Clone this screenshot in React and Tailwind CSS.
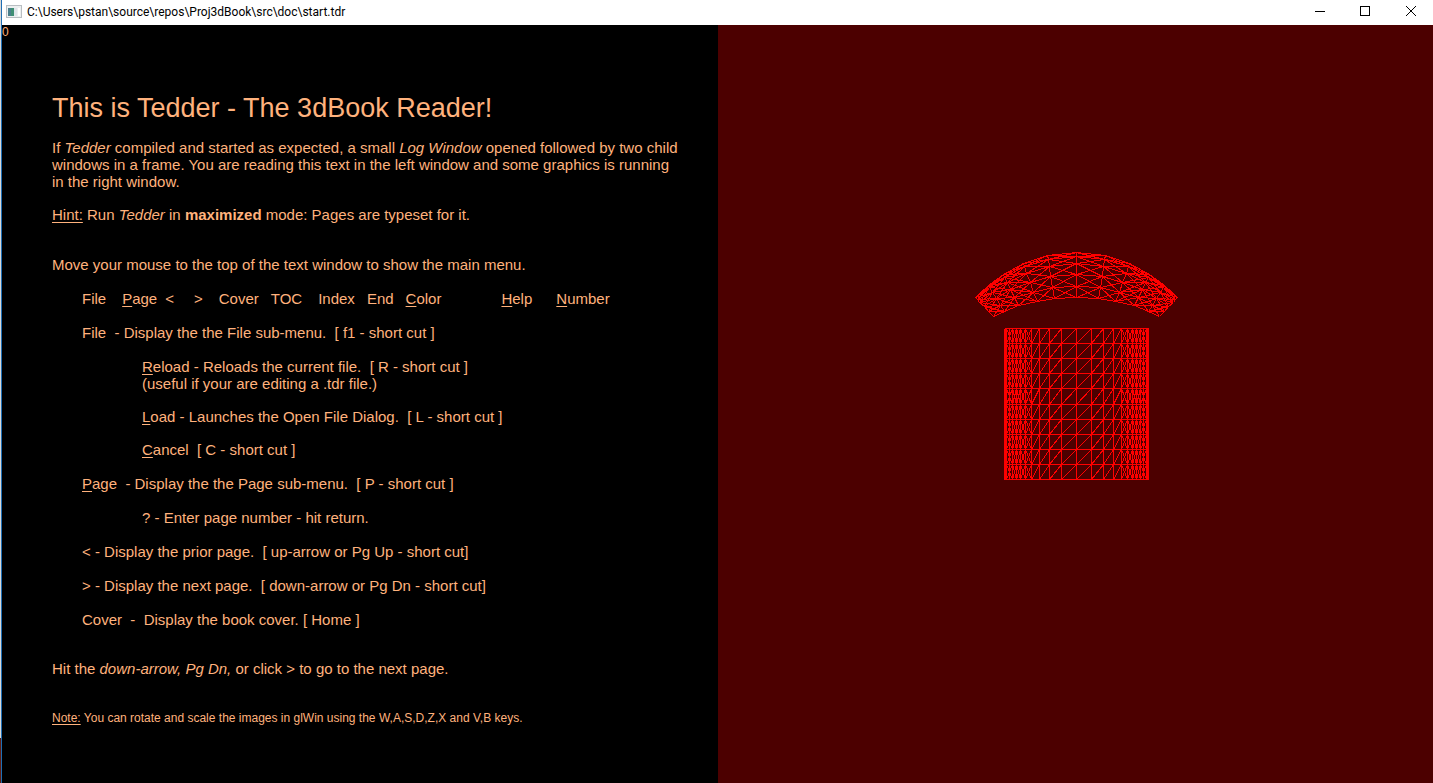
import React from "react";

const offsets = [0, 15, 27, 37, 45, 51, 56, 60, 64, 67, 70, 71, 72];
const columnXs = [...offsets.slice(1).reverse().map((o) => 72 - o), ...offsets.map((o) => 72 + o)];
const rowYs = [0, 15, 30, 45, 60, 76, 91, 106, 121, 136, 151];
const crossed = [[2, 8], [8, 12], [12, 16], [16, 21], [21, 27]];

function columnPath() {
  let d = "";
  columnXs.forEach((x) => {
    d += `M${x} 0V151`;
  });
  rowYs.forEach((y) => {
    d += `M0 ${y}H144`;
  });
  for (let r = 0; r < rowYs.length - 1; r++) {
    const top = rowYs[r];
    const bottom = rowYs[r + 1];
    for (let c = 0; c < columnXs.length - 1; c++) {
      const a = columnXs[c];
      const b = columnXs[c + 1];
      if (a >= 21 && b <= 123) d += `M${a} ${bottom}L${b} ${top}`;
    }
    crossed.forEach(([a, b]) => {
      d += `M${a} ${bottom}L${b} ${top}M${a} ${top}L${b} ${bottom}`;
      d += `M${144 - a} ${bottom}L${144 - b} ${top}M${144 - a} ${top}L${144 - b} ${bottom}`;
    });
  }
  return d;
}

const topArc = [[0, 0], [29, 3], [53, 11], [73, 22], [88, 33], [101, 45]];
const bottomArc = [[0, 45], [22, 46], [39, 49], [58, 53], [72, 59], [83, 64]];
const bands = [0, 0.09, 0.25, 0.49, 0.75, 1];

function archPath() {
  let d = "";
  [-1, 1].forEach((side) => {
    const node = (c, r) => {
      const t = bands[r];
      const x = topArc[c][0] + (bottomArc[c][0] - topArc[c][0]) * t;
      const y = topArc[c][1] + (bottomArc[c][1] - topArc[c][1]) * t;
      return `${101 + side * Math.round(x)} ${Math.round(y)}`;
    };
    for (let c = 0; c <= 5; c++) {
      for (let r = 0; r <= 5; r++) {
        if (r < 5) d += `M${node(c, r)}L${node(c, r + 1)}`;
        if (c < 5) d += `M${node(c, r)}L${node(c + 1, r)}`;
        if (c < 5 && r < 5) {
          d += `M${node(c, r)}L${node(c + 1, r + 1)}`;
          d += `M${node(c, r + 1)}L${node(c + 1, r)}`;
        }
        if (c >= 2 && c < 5 && r >= 2) d += `M${node(c, r)}L${node(c + 1, r - 2)}`;
      }
    }
  });
  return d;
}

function TitleBar() {
  const button = "flex h-full w-[46px] justify-center pt-1.5";
  return (
    <header className="flex h-[25px] shrink-0 items-center bg-white text-black">
      <svg className="mb-0.5 ml-1 h-4 w-4 shrink-0" viewBox="0 0 16 16" shapeRendering="crispEdges" aria-hidden="true">
        <rect x="0" y="1" width="16" height="13" fill="#b9bec2" />
        <rect x="1" y="2" width="14" height="11" fill="#eceff0" />
        <rect x="2" y="4" width="6" height="8" fill="#3f8f74" />
        <rect x="2" y="4" width="3" height="8" fill="#4a7f8c" />
        <rect x="8" y="4" width="3" height="8" fill="#dfe5ea" />
        <rect x="12" y="4" width="2" height="8" fill="#ffffff" />
      </svg>
      <h1 className="mb-0.5 ml-[5px] flex-1 truncate font-[Roboto,sans-serif] text-xs">
        C:\Users\pstan\source\repos\Proj3dBook\src\doc\start.tdr
      </h1>
      <button aria-label="Minimize" className={button}>
        <svg className="h-3.5 w-3.5" viewBox="0 0 14 14" shapeRendering="crispEdges"><path d="M4 5.5H14" stroke="#000" /></svg>
      </button>
      <button aria-label="Maximize" className={button}>
        <svg className="h-3.5 w-3.5" viewBox="0 0 14 14" shapeRendering="crispEdges"><rect x="3.5" y="0.5" width="9" height="9" fill="none" stroke="#000" /></svg>
      </button>
      <button aria-label="Close" className={button}>
        <svg className="h-3.5 w-3.5" viewBox="0 0 14 14"><path d="M3 0L13 10M13 0L3 10" stroke="#000" /></svg>
      </button>
    </header>
  );
}

function U({ children }) {
  return <span className="underline underline-offset-2">{children}</span>;
}

function MenuWords() {
  return (
    <ul className="flex">
      <li>File</li>
      <li className="ml-4"><U>P</U>age</li>
      <li className="ml-2">&lt;</li>
      <li className="ml-5">&gt;</li>
      <li className="ml-4">Cover</li>
      <li className="ml-3">TOC</li>
      <li className="ml-4">Index</li>
      <li className="ml-3">End</li>
      <li className="ml-3"><U>C</U>olor</li>
      <li className="ml-15"><U>H</U>elp</li>
      <li className="ml-6"><U>N</U>umber</li>
    </ul>
  );
}

function TextPage() {
  return (
    <main className="min-w-0 bg-black font-['Liberation_Sans',Arial,sans-serif] text-[#ffb27d]">
      <div className="h-[68px] text-xs leading-[15px]">0</div>
      <article className="flex flex-col gap-4 px-[50px] text-[15px] leading-[17px]">
        <h2 className="text-[27px] leading-[30px]">This is Tedder - The 3dBook Reader!</h2>
        <p>
          <span className="block whitespace-nowrap text-justify [text-align-last:justify]">
            If <i>Tedder</i> compiled and started as expected, a small <i>Log Window</i> opened followed by two child{" "}
          </span>
          <span className="block whitespace-nowrap text-justify [text-align-last:justify]">
            windows in a frame. You are reading this text in the left window and some graphics is running{" "}
          </span>
          <span className="block">in the right window.</span>
        </p>
        <p><U>Hint:</U> Run <i>Tedder</i> in <b>maximized</b> mode: Pages are typeset for it.</p>
        <div className="flex flex-col gap-[17px] pt-[17px]">
          <p>Move your mouse to the top of the text window to show the main menu.</p>
          <div className="flex flex-col gap-[17px] whitespace-pre pl-[30px]">
            <MenuWords />
            <p>{"File  - Display the the File sub-menu.  [ f1 - short cut ]"}</p>
            <div className="flex flex-col gap-4 pl-[60px]">
              <p><U>R</U>{"eload - Reloads the current file.  [ R - short cut ]\n(useful if your are editing a .tdr file.)"}</p>
              <p><U>L</U>{"oad - Launches the Open File Dialog.  [ L - short cut ]"}</p>
              <p><U>C</U>{"ancel  [ C - short cut ]"}</p>
            </div>
            <p><U>P</U>{"age  - Display the the Page sub-menu.  [ P - short cut ]"}</p>
            <p className="pl-[60px]">? - Enter page number - hit return.</p>
            <p>{"< - Display the prior page.  [ up-arrow or Pg Up - short cut]"}</p>
            <p>{"> - Display the next page.  [ down-arrow or Pg Dn - short cut]"}</p>
            <p>{"Cover  -  Display the book cover. [ Home ]"}</p>
          </div>
        </div>
        <p className="pt-4">Hit the <i>down-arrow, Pg Dn,</i> or click &gt; to go to the next page.</p>
        <p className="pt-[17px] text-xs leading-[17px]"><U>Note:</U> You can rotate and scale the images in glWin using the W,A,S,D,Z,X and V,B keys.</p>
      </article>
    </main>
  );
}

function GraphicsView() {
  return (
    <section aria-label="Graphics" className="flex min-w-0 flex-col items-center bg-[#4c0000] pl-0.5 pt-[227px]">
      <svg className="h-[66px] w-[203px]" viewBox="0 0 203 66" shapeRendering="crispEdges">
        <path d={archPath()} transform="translate(.5 .5)" fill="none" stroke="#f00" />
      </svg>
      <svg className="mt-[10px] h-[152px] w-[145px]" viewBox="0 0 145 152" shapeRendering="crispEdges">
        <path d={columnPath()} transform="translate(.5 .5)" fill="none" stroke="#f00" />
      </svg>
    </section>
  );
}

export default function App() {
  return (
    <div className="flex min-h-screen">
      <div className="flex w-px flex-col">
        <div className="flex-1 bg-[#d8d8d8]" />
        <div className="h-[45px] bg-[#5a1c12]" />
      </div>
      <div className="w-px bg-[#1f6fb5]" />
      <div className="flex min-w-0 flex-1 flex-col">
        <TitleBar />
        <div className="grid flex-1 grid-cols-2">
          <TextPage />
          <GraphicsView />
        </div>
      </div>
    </div>
  );
}
